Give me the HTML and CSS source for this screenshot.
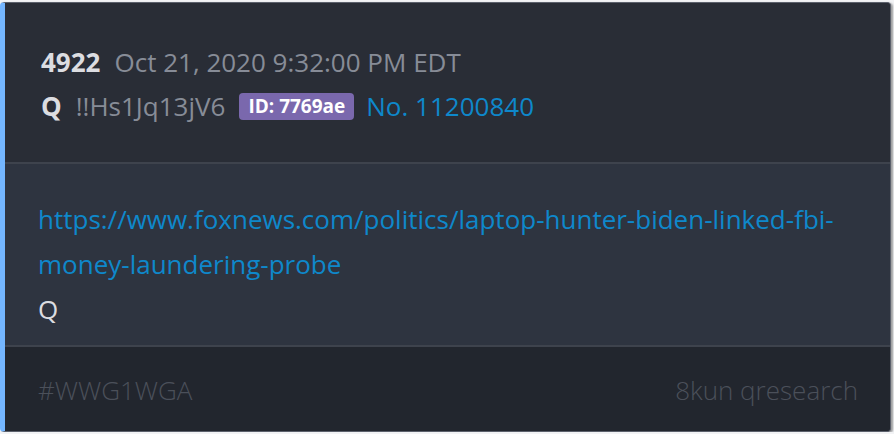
FILE: index.html
```html
<!DOCTYPE html>
<html lang="en">
<head>
    <meta charset="UTF-8">
    <meta name="viewport" content="width=device-width, initial-scale=1.0">
    <title>Drop 4922</title>
    <link rel="stylesheet" href="styles.css">
</head>
<body>
    <!-- Karta příspěvku -->
    <div class="post-card">
        <div class="post-header">
            <div class="header-row">
                <span class="post-num">4922</span>
                <span class="post-date">Oct 21, 2020 9:32:00 PM EDT</span>
            </div>
            <div class="header-row">
                <span class="post-author">Q</span>
                <span class="post-trip">!!Hs1Jq13jV6</span>
                <span class="id-badge">ID: 7769ae</span>
                <a href="#" class="post-link">No. 11200840</a>
            </div>
        </div>

        <div class="post-body">
            <a href="#" class="body-link">https://www.foxnews.com/politics/laptop-hunter-biden-linked-fbi-money-laundering-probe</a>
            <div class="body-text">Q</div>
        </div>

        <div class="post-footer">
            <span>#WWG1WGA</span>
            <span>8kun qresearch</span>
        </div>
    </div>
</body>
</html>
```

FILE: styles.css
```css
body, html {
    margin: 0;
    padding: 0;
    background-color: #f2f3f5;
    font-family: 'Open Sans', sans-serif;
}
.post-card {
    width: 891px;
    margin: 2px 0 0 0;
    height: 430px;
    box-sizing: border-box;
    border: 1px solid #5c616c;
    border-left: 5px solid #74b6ff;
    border-radius: 4px;
    background-color: #2e3440;
    overflow: hidden;
    display: flex;
    flex-direction: column;
    box-shadow: 2px 1px 2px rgba(0, 0, 0, 0.35);
}

.post-header {
    background-color: #292d36;
    padding: 37px 36px 34px;
    border-bottom: 2px solid #3e434d;
    font-size: 26px;
    line-height: 44px;
}
.header-row {
    display: flex;
    align-items: center;
    gap: 14px;
    white-space: nowrap;
}
.post-num, .post-author {
    font-weight: 700;
    color: #dcdde1;
}
.post-date, .post-trip {
    color: #878c97;
}
.id-badge {
    background-color: #7a68ad;
    color: #fff;
    font-weight: 700;
    font-size: 19px;
    line-height: 27px;
    padding: 0 9px;
    border-radius: 4px;
}
.post-link {
    color: #0e88cb;
    text-decoration: none;
    margin-left: -2px;
}

.post-body {
    flex: 1;
    padding: 33px 36px 0 33px;
    font-size: 26px;
    line-height: 45px;
}
.body-link {
    color: #0e88cb;
    text-decoration: none;
    word-break: break-word;
}
.body-text {
    color: #dcdde1;
}

.post-footer {
    flex: none;
    background-color: #22262e;
    border-top: 2px solid #3e434d;
    height: 82px;
    padding: 2px 32px 0 33px;
    display: flex;
    justify-content: space-between;
    align-items: center;
    font-size: 26px;
    font-weight: 300;
    color: #4b505a;
}
```
